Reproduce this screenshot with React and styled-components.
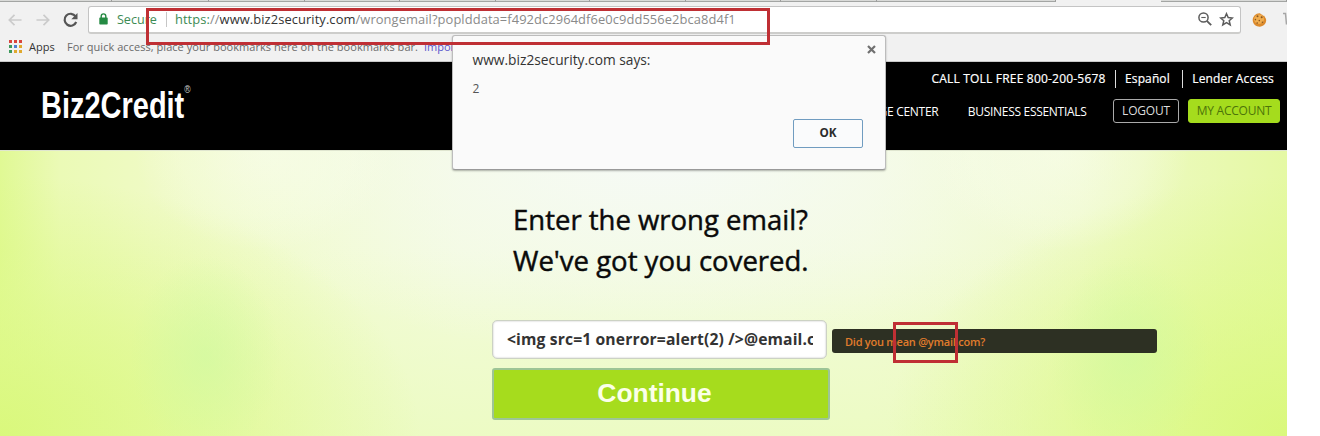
import React from "react";
import styled, { createGlobalStyle } from "styled-components";

const Global = createGlobalStyle`
  * { box-sizing: border-box; }
  body { margin: 0; background: #fff; font-family: "Open Sans", "Noto Sans", sans-serif; }
`;

const Browser = styled.div`
  position: relative;
  width: 1287px;
  height: 436px;
  display: flex;
  flex-direction: column;
  overflow: hidden;
`;

const TabStrip = styled.div`
  display: flex;
  flex: none;
  height: 2px;
  background: #f1f1f1;
`;

const TabEdge = styled.span`
  width: ${(p) => p.$w}px;
  height: 2px;
  background: ${(p) => (p.$active ? "#f1f1f1" : "#d9dad8")};
  border-bottom: 1px solid ${(p) => (p.$active ? "#f1f1f1" : "#a3a5a3")};
  border-right: 1px solid ${(p) => (p.$active ? "#f1f1f1" : "#9b9b9b")};
`;

const Toolbar = styled.div`
  display: flex;
  flex: none;
  align-items: center;
  height: 36px;
  padding: 0 0 1px 8px;
  background: #f1f1f1;
`;

const NavIcons = styled.div`
  display: flex;
  align-items: center;
  width: 80px;
`;
const Arrows = styled.div`
  display: flex;
  gap: 14px;
`;
const ReloadIcon = styled.svg`
  width: 15px;
  height: 16px;
  margin-left: 13px;
`;

const Omnibox = styled.div`
  display: flex;
  align-items: center;
  width: 1154px;
  height: 28px;
  padding: 0 6px 0 10px;
  background: #fff;
  border: 1px solid #c4c4c4;
  border-bottom: 2px solid #cdcdcb;
  border-radius: 3px;
  font-size: 12.9px;
  white-space: nowrap;
`;

const Secure = styled.span`
  width: 49px;
  margin-left: 9px;
  color: #3d8b54;
  font-size: 12.6px;
`;

const Divider = styled.span`
  width: 1px;
  height: 15px;
  background: #c6c6c6;
`;

const Url = styled.span`
  flex: 1;
  margin-left: 8px;
  color: #8a8a8a;
  letter-spacing: 0.085px;
`;
const Scheme = styled.span`color: #3d8b54;`;
const Host = styled.span`color: #333;`;

const OmniIcons = styled.div`
  display: flex;
  align-items: center;
  gap: 6px;
`;

const Extensions = styled.div`
  display: flex;
  align-items: center;
  gap: 16px;
  margin-left: 10px;
`;

const Bookmarks = styled.div`
  display: flex;
  flex: none;
  align-items: center;
  height: 24px;
  padding: 0 0 6px 9px;
  background: #f1f1f1;
  border-bottom: 1px solid #c9c9c9;
  font-size: 11px;
  white-space: nowrap;
  color: #6a6a6a;
`;
const AppsLabel = styled.span`
  width: 38px;
  margin-left: 7px;
  color: #333;
`;
const Hint = styled.span`
  width: 357px;
  letter-spacing: 0.04px;
`;
const ImportLink = styled.span`color: #5a55cc;`;

const SiteHeader = styled.header`
  display: flex;
  flex: none;
  justify-content: space-between;
  height: 88px;
  background: #000;
  color: #fff;
`;

const Logo = styled.div`
  display: flex;
  align-items: flex-start;
  padding: 23px 0 0 41px;
  font-family: "Liberation Sans Narrow", "Liberation Sans", sans-serif;
  font-size: 37px;
  line-height: 42px;
  font-weight: 700;
  transform: scaleX(${(p) => p.$condense});
  transform-origin: 41px 0;
`;
const Registered = styled.span`
  font-size: 11px;
  line-height: 9px;
  font-weight: 400;
  color: #ccc;
`;

const HeaderRight = styled.div`
  display: flex;
  flex-direction: column;
  align-items: flex-end;
  padding: 7px 7px 0 0;
  white-space: nowrap;
`;

const UtilityRow = styled.div`
  display: flex;
  align-items: center;
  height: 20px;
  padding-right: 6px;
  font-size: 12px;
  -webkit-text-stroke: 0.2px #fff;
`;
const UtilityItem = styled.span`
  margin-left: ${(p) => p.$offset || 0}px;
  padding: 0 ${(p) => (p.$last ? 0 : 9.5)}px 0 ${(p) => (p.$first ? 0 : 9)}px;
  border-left: ${(p) => (p.$first ? "none" : "1px solid #ddd")};
  line-height: 18px;
  letter-spacing: ${(p) => p.$track || 0}px;
`;

const MainNav = styled.nav`
  display: flex;
  align-items: center;
  height: 24px;
  margin-top: 10px;
  font-size: 12px;
`;
const NavItem = styled.span`
  margin-right: ${(p) => p.$gap}px;
  letter-spacing: ${(p) => p.$track}px;
`;
const NavButton = styled.button`
  width: ${(p) => p.$w}px;
  height: 24px;
  margin-left: ${(p) => (p.$primary ? 9 : 0)}px;
  padding: 0;
  border: 1px solid ${(p) => (p.$primary ? "#a5dc1d" : "#aaa")};
  border-radius: 3px;
  background: ${(p) => (p.$primary ? "#a5dc1d" : "#000")};
  color: ${(p) => (p.$primary ? "#4d7409" : "#ddd")};
  font: 12px/22px "Open Sans", sans-serif;
  letter-spacing: ${(p) => p.$track}px;
`;

const Hero = styled.main`
  flex: 1;
  padding: 49px 0 0 492px;
  background:
    radial-gradient(ellipse 75px 100px at 205px 205px, rgba(206, 250, 160, 0.6), rgba(206, 250, 160, 0) 100%),
    radial-gradient(ellipse 80px 100px at 1130px 205px, rgba(206, 250, 160, 0.6), rgba(206, 250, 160, 0) 100%),
    radial-gradient(ellipse 130px 100px at 265px 0px, rgba(249, 253, 238, 0.6), rgba(249, 253, 238, 0.3) 65%, rgba(249, 253, 238, 0) 100%),
    radial-gradient(ellipse 130px 100px at 1060px 0px, rgba(249, 253, 238, 0.6), rgba(249, 253, 238, 0.3) 65%, rgba(249, 253, 238, 0) 100%),
    radial-gradient(ellipse 420px 260px at 0 100%, rgba(216, 248, 118, 0.9), rgba(220, 249, 130, 0.6) 50%, rgba(220, 249, 130, 0) 100%),
    radial-gradient(ellipse 400px 260px at 100% 100%, rgba(216, 248, 118, 0.9), rgba(220, 249, 130, 0.6) 50%, rgba(220, 249, 130, 0) 100%),
    radial-gradient(ellipse 460px 210px at 660px 0, rgba(246, 250, 247, 1), rgba(245, 250, 240, 0) 100%),
    linear-gradient(180deg, rgba(234, 251, 188, 0) 35%, rgba(234, 251, 188, 0.75) 100%),
    linear-gradient(90deg, #e0f994 0, #ebfab6 60px, #effac4 150px, #f1fbd0 300px, #f3fbdc 460px, #f2fbdc 660px, #f3fbda 870px, #effaca 1080px, #e8f9ae 1230px, #e5f9a4 1287px);
  border-top: 1px solid #dfe5cf;
`;

const Heading = styled.h1`
  margin: 0;
  padding-left: 21px;
  font-size: 27.5px;
  line-height: 40.5px;
  font-weight: 400;
  color: #0a0a0a;
  -webkit-text-stroke: 0.45px #0a0a0a;
  white-space: nowrap;
`;
const HeadingLine = styled.span`display: block;`;

const FieldRow = styled.div`
  display: flex;
  align-items: center;
  margin-top: 39px;
`;
const EmailField = styled.input`
  width: 335px;
  height: 39px;
  padding: 0 13px 1px 14px;
  border: 1px solid #ccd2c4;
  border-radius: 5px;
  outline: none;
  background: #fff;
  box-shadow: inset 0 0 2px #bbb;
  color: #333;
  font: 700 15.7px "Open Sans", sans-serif;
  letter-spacing: 0.13px;
`;
const Suggestion = styled.div`
  width: 325px;
  height: 24px;
  margin: 2px 0 0 5px;
  padding-left: 13px;
  border-radius: 3px;
  background: #2d3023;
  color: #e07c2c;
  font-size: 11px;
  line-height: 26px;
  font-weight: 600;
  white-space: nowrap;
  letter-spacing: -0.24px;
`;
const Continue = styled.button`
  display: block;
  width: 338px;
  height: 52px;
  margin-top: 9px;
  padding: 0 13px 3px 0;
  border: 2px solid #9dc596;
  border-radius: 3px;
  background: #a6dc1d;
  color: #fbffe9;
  font: 700 26.4px/44px "Liberation Sans", Arial, sans-serif;
`;

const Dialog = styled.div`
  position: absolute;
  left: 452px;
  top: 35px;
  width: 434px;
  height: 135px;
  padding: 14px 22px 0 19.5px;
  border: 1px solid #bcbcbc;
  border-bottom-color: #999;
  border-radius: 3px;
  background: #fafafa;
  box-shadow: 0 1px 2px rgba(0, 0, 0, 0.3);
`;
const DialogHead = styled.div`
  display: flex;
  justify-content: space-between;
  height: 20px;
  margin-right: -13px;
  font-size: 13.75px;
  line-height: 20px;
  color: #333;
`;
const DialogClose = styled.svg`
  width: 9px;
  height: 9px;
  margin-top: -5px;
`;
const DialogBody = styled.p`
  margin: 10px 0 0;
  font-size: 12px;
  line-height: 18px;
  color: #555;
`;
const DialogActions = styled.div`
  display: flex;
  justify-content: flex-end;
  margin-top: 21px;
`;
const OkButton = styled.button`
  width: 70px;
  height: 29px;
  padding: 0 0 3px;
  border: 1px solid #709cc0;
  border-radius: 2px;
  background: #fafbfc;
  color: #2b2b2b;
  font: 700 11.7px/24px "Open Sans", sans-serif;
`;

const Marker = styled.div`
  position: absolute;
  left: ${(p) => p.$x}px;
  top: ${(p) => p.$y}px;
  width: ${(p) => p.$w}px;
  height: ${(p) => p.$h}px;
  border: 3px solid #bf2f34;
`;

const appColors = ["#d9453c", "#d9453c", "#d9453c", "#3e9a5c", "#4d7fd0", "#e0a92e", "#3e9a5c", "#e0a92e", "#e0a92e"];

const ArrowIcon = ({ back }) => (
  <svg width="14" height="12" viewBox="0 0 14 12" fill="none" stroke="#cbcbcb" strokeWidth="1.7">
    {back ? <path d="M13.5 6H1.5M6.5 .8L1.3 6l5.2 5.2" /> : <path d="M.5 6h12M7.5 .8L12.7 6l-5.2 5.2" />}
  </svg>
);

export default function App() {
  return (
    <>
      <Global />
      <Browser>
        <TabStrip>
          <TabEdge $w={112} /><TabEdge $w={97} /><TabEdge $w={96} /><TabEdge $w={95} /><TabEdge $w={96} />
          <TabEdge $w={94} /><TabEdge $w={96} /><TabEdge $w={95} /><TabEdge $w={96} /><TabEdge $w={179} />
          <TabEdge $w={105} $active /><TabEdge $w={126} />
        </TabStrip>
        <Toolbar>
          <NavIcons>
            <Arrows><ArrowIcon back /><ArrowIcon /></Arrows>
            <ReloadIcon viewBox="0 0 15 16" fill="none">
              <path d="M12.6 4.4A6 6 0 1 0 13.2 10" stroke="#555" strokeWidth="2.2" />
              <path d="M14.5 1v6.3H8.3z" fill="#555" />
            </ReloadIcon>
          </NavIcons>
          <Omnibox>
            <svg width="9" height="12" viewBox="0 0 9 12">
              <path d="M2.2 5V3.2a2.3 2.3 0 0 1 4.6 0V5" fill="none" stroke="#258a43" strokeWidth="1.4" />
              <rect x=".3" y="4.6" width="8.4" height="7" rx=".8" fill="#258a43" />
            </svg>
            <Secure>Secure</Secure>
            <Divider />
            <Url><Scheme>https:</Scheme>//<Host>www.biz2security.com</Host>/wrongemail?poplddata=f492dc2964df6e0c9dd556e2bca8d4f1</Url>
            <OmniIcons>
              <svg width="16" height="16" viewBox="0 0 16 16" fill="none" stroke="#5c5c5c">
                <circle cx="6.5" cy="6.5" r="4.6" strokeWidth="1.5" />
                <path d="M4.3 6.5h4.4" strokeWidth="1.1" />
                <path d="M9.8 9.8l4.4 4.4" strokeWidth="1.9" />
              </svg>
              <svg width="15" height="15" viewBox="0 0 15 15" fill="none" stroke="#5c5c5c" strokeWidth="1.5">
                <path d="M7.5 1.7l1.7 3.9 4.2.4-3.2 2.8 1 4.1-3.7-2.200-3.7 2.200 1-4.100L1.600 6l4.200-.4z" />
              </svg>
            </OmniIcons>
          </Omnibox>
          <Extensions>
            <svg width="16" height="16" viewBox="0 0 16 16">
              <path d="M9 1.400c1 .1 1.100 1.300 2.300 1.300.3.900 1 1.100 2 1.100.2 1.300 1.900 2.500 1.900 4.300 0 3.800-3 6.600-6.500 6.600S1.700 11.900 1.700 8.200C1.700 4.500 5.200 1 9 1.400z" fill="#dc8a2c" />
              <ellipse cx="8" cy="7.3" rx="5" ry="4.7" fill="#f0ad4e" />
              <g fill="#8a5620">
                <circle cx="6.5" cy="4.2" r="1" /><circle cx="10.7" cy="5.2" r="1" />
                <circle cx="4.4" cy="7.6" r=".8" /><circle cx="8.3" cy="8.6" r=".8" />
                <circle cx="6.2" cy="11" r=".8" /><circle cx="11.4" cy="10.2" r=".8" />
              </g>
            </svg>
            <svg width="4" height="15" viewBox="0 0 4 15">
              <path d="M0 1.5h2.500l1 11" fill="none" stroke="#a6a6a6" strokeWidth="1.5" />
            </svg>
          </Extensions>
        </Toolbar>
        <Bookmarks>
          <svg width="13" height="13" viewBox="0 0 13 13">
            {appColors.map((c, i) => (
              <rect key={i} x={(i % 3) * 5} y={Math.floor(i / 3) * 5} width="3" height="3" fill={c} />
            ))}
          </svg>
          <AppsLabel>Apps</AppsLabel>
          <Hint>For quick access, place your bookmarks here on the bookmarks bar.</Hint>
          <ImportLink>Import</ImportLink>
        </Bookmarks>
        <SiteHeader>
          <Logo $condense={0.783}>Biz2Credit<Registered>®</Registered></Logo>
          <HeaderRight>
            <UtilityRow>
              <UtilityItem $first $track={0.2}>CALL TOLL FREE 800-200-5678</UtilityItem>
              <UtilityItem $track={0.1}>Español</UtilityItem>
              <UtilityItem $last $offset={3} $track={0.15}>Lender Access</UtilityItem>
            </UtilityRow>
            <MainNav>
              <NavItem $gap={29.5} $track={-0.3}>KNOWLEDGE CENTER</NavItem>
              <NavItem $gap={26.5} $track={-0.3}>BUSINESS ESSENTIALS</NavItem>
              <NavButton $w={66} $track={-0.2}>LOGOUT</NavButton>
              <NavButton $w={92} $track={-0.25} $primary>MY ACCOUNT</NavButton>
            </MainNav>
          </HeaderRight>
        </SiteHeader>
        <Hero>
          <Heading>
            <HeadingLine>Enter the wrong email?</HeadingLine>
            <HeadingLine>We've got you covered.</HeadingLine>
          </Heading>
          <FieldRow>
            <EmailField defaultValue="<img src=1 onerror=alert(2) />@email.com" />
            <Suggestion>Did you mean @ymail.com?</Suggestion>
          </FieldRow>
          <Continue>Continue</Continue>
        </Hero>
        <Dialog role="dialog">
          <DialogHead>
            <span>www.biz2security.com says:</span>
            <DialogClose viewBox="0 0 9 9"><path d="M1 1l7 7M8 1L1 8" stroke="#707070" strokeWidth="2.2" /></DialogClose>
          </DialogHead>
          <DialogBody>2</DialogBody>
          <DialogActions><OkButton>OK</OkButton></DialogActions>
        </Dialog>
        <Marker $x={146} $y={8} $w={624} $h={37} />
        <Marker $x={893} $y={322} $w={65} $h={41} />
      </Browser>
    </>
  );
}
